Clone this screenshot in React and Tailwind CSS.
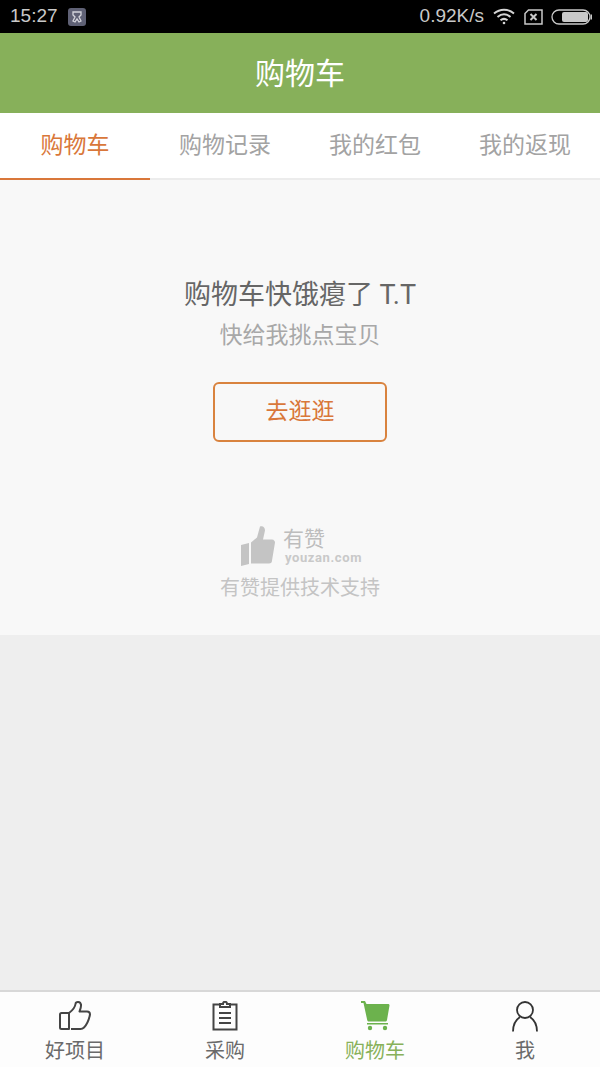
import React from "react";

const font = { fontFamily: '"Roboto","Noto Sans CJK SC",sans-serif' };

function Tab({ label, active }) {
  return (
    <div className={`w-[150px] h-[67px] flex items-center justify-center text-[23px] border-b-2 pt-[2px] ${active ? "text-[#d9773a] border-[#d9773a]" : "text-[#a3a3a3] border-[#ececec]"}`}>
      {label}
    </div>
  );
}

function NavItem({ icon, label, color }) {
  return (
    <div className="w-[150px] flex flex-col items-center">
      <div className="h-[40px] mt-[4px] flex items-center justify-center">{icon}</div>
      <div className={`text-[20px] leading-[26px] mt-[2px] ${color}`}>{label}</div>
    </div>
  );
}

export default function App() {
  return (
    <div className="w-[600px] h-[1067px] flex flex-col overflow-hidden bg-[#eeeeee]" style={font}>
      <div className="h-[33px] bg-black flex items-center justify-between text-[#c9c9c9] shrink-0">
        <div className="flex items-center pl-[10px] gap-[10px]">
          <span className="text-[19px]" style={{ fontFamily: '"Liberation Sans",sans-serif' }}>15:27</span>
          <svg width="18" height="18" viewBox="0 0 18 18">
            <rect width="18" height="18" rx="3" fill="#5f6175" />
            <path d="M5 4h8v3l-2 2 2 4-2 1-2-3-2 3-2-1 2-4-2-2z" fill="none" stroke="#d5d5dc" strokeWidth="1.3" />
          </svg>
        </div>
        <div className="flex items-center pr-[8px]">
          <span className="text-[19px] mr-[9px] ml-[-2px]" style={{ fontFamily: '"Liberation Sans",sans-serif' }}>0.92K/s</span>
          <svg width="22" height="17" viewBox="0 0 22 17" fill="none" stroke="#d5d5d5" strokeWidth="2" className="mr-[9px]">
            <path d="M1 5.5C7 .5 15 .5 21 5.5" />
            <path d="M4.5 9C8.5 5.7 13.5 5.7 17.500 9" />
            <path d="M7.500 12.300C9.500 10.700 12.500 10.700 14.500 12.300" />
            <circle cx="11" cy="15" r="1.300" fill="#d5d5d5" stroke="none" />
          </svg>
          <svg width="19" height="16" viewBox="0 0 19 16" fill="none" stroke="#c9c9c9" className="mr-[8px]">
            <path d="M4.500 1h13.500v14H1V4.500z" strokeWidth="1.500" />
            <path d="M6.500 5l6 6M12.500 5l-6 6" strokeWidth="2" />
          </svg>
          <svg width="41" height="16" viewBox="0 0 41 16">
            <rect x="1" y="1" width="38" height="14" rx="7" fill="none" stroke="#c9c9c9" strokeWidth="1.300" />
            <rect x="11" y="3" width="26" height="10" rx="2" fill="#c9c9c9" />
            <rect x="39.500" y="5.500" width="1.500" height="5" fill="#c9c9c9" />
          </svg>
        </div>
      </div>

      <div className="h-[80px] bg-[#87b05a] flex items-center justify-center text-white text-[30px] shrink-0">购物车</div>

      <div className="flex bg-white shrink-0">
        <Tab label="购物车" active />
        <Tab label="购物记录" />
        <Tab label="我的红包" />
        <Tab label="我的返现" />
      </div>

      <div className="h-[455px] bg-[#f8f8f8] flex flex-col items-center shrink-0">
        <div className="mt-[96px] text-[27px] leading-[38px] text-[#666666]">购物车快饿瘪了 T.T</div>
        <div className="mt-[5px] text-[23px] leading-[34px] text-[#a8a8a8]">快给我挑点宝贝</div>
        <div className="mt-[29px] w-[174px] h-[60px] border-2 border-[#d9833f] rounded-[6px] flex items-center justify-center text-[23px] text-[#d9773a]">去逛逛</div>
        <div className="mt-[81px] ml-[3px] flex items-center h-[46px]">
          <svg width="34" height="40" viewBox="0 0 34 40" className="mr-[8px]">
            <path d="M0 19l8-2v21l-8 2z" fill="#c4c4c4" />
            <path d="M10 16.500l6-5 3-11c3-1 5 1 5 4l-2 9h9c2 0 3 2 3 3l-3 18c0 2-1 3-3 3H10z" fill="#c4c4c4" />
          </svg>
          <div className="flex flex-col items-start">
            <div className="text-[21px] leading-[23px] text-[#bdbdbd]">有赞</div>
            <div className="text-[13px] leading-[14px] font-bold tracking-[0.6px] ml-[2px] text-[#c9c9c9]">youzan.com</div>
          </div>
        </div>
        <div className="mt-[4px] text-[20px] leading-[30px] text-[#c4c4c4]">有赞提供技术支持</div>
      </div>

      <div className="flex-1" />

      <div className="h-[77px] bg-[#fdfdfd] border-t-2 border-[#d8d8d8] flex shrink-0">
        <NavItem
          label="好项目"
          color="text-[#6a6a6a]"
          icon={
            <svg width="32" height="32" viewBox="0 0 32 32" fill="none" stroke="#444" strokeWidth="2" strokeLinejoin="round" className="mr-[1px]">
              <path d="M10 13H2.500c-1 0-1.500.5-1.500 1.500v13c0 1 .5 1.500 1.500 1.500H10z" />
              <path d="M10 13c4-3 6-5 6.500-9 .3-2.500 5-3 5.500 1 .3 2-1 5-1.500 6.500H28c2 0 3 1.500 3 3-1 5-3 10-6 13-1 1-2 1.500-3.500 1.500H12" />
            </svg>
          }
        />
        <NavItem
          label="采购"
          color="text-[#6a6a6a]"
          icon={
            <svg width="26" height="30" viewBox="0 0 26 30" fill="none" stroke="#444" strokeWidth="2">
              <path d="M8 3.500H1.500v25h23v-25H18" />
              <path d="M8 6V3h3c0-3 4-3 4 0h3v3z" />
              <path d="M7 12h12M7 17h12M7 22h12" />
            </svg>
          }
        />
        <NavItem
          label="购物车"
          color="text-[#88b15a]"
          icon={
            <svg width="30" height="30" viewBox="0 0 30 30" fill="#6cb24d">
              <path d="M1 0h4l1.500 3H28c1 0 1.500.5 1.500 1.500L27 19c-.2 1-1 1.500-2 1.500H9c-1 0-1.500-.5-1.800-1.500L3.500 2H1z" />
              <rect x="7" y="22" width="21" height="1.500" />
              <circle cx="10" cy="27" r="2.200" />
              <circle cx="25" cy="27" r="2.200" />
            </svg>
          }
        />
        <NavItem
          label="我"
          color="text-[#6a6a6a]"
          icon={
            <svg width="26" height="31" viewBox="0 0 26 31" fill="none" stroke="#333" strokeWidth="1.800">
              <ellipse cx="13" cy="9" rx="8" ry="8" />
              <path d="M8 16C3.500 19 1 24 1 30.500M18 16c4.500 3 7 8 7 14.500" />
            </svg>
          }
        />
      </div>
    </div>
  );
}
